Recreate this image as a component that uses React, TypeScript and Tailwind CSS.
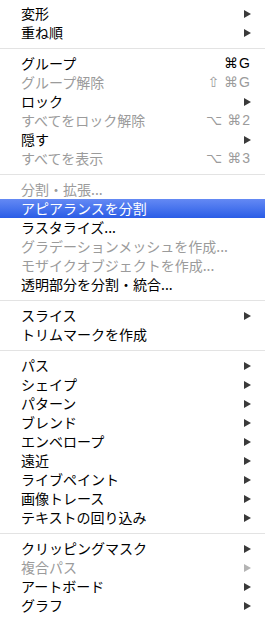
import type { ReactNode } from 'react';

type Item = {
    label: string;
    disabled?: boolean;
    arrow?: boolean;
    shortcut?: string;
    active?: boolean;
};

const groups: Item[][] = [
    [
        { label: '変形', arrow: true },
        { label: '重ね順', arrow: true },
    ],
    [
        { label: 'グループ', shortcut: '⌘G' },
        { label: 'グループ解除', shortcut: '⇧⌘G', disabled: true },
        { label: 'ロック', arrow: true },
        { label: 'すべてをロック解除', shortcut: '⌥⌘2', disabled: true },
        { label: '隠す', arrow: true },
        { label: 'すべてを表示', shortcut: '⌥⌘3', disabled: true },
    ],
    [
        { label: '分割・拡張...', disabled: true },
        { label: 'アピアランスを分割', active: true },
        { label: 'ラスタライズ...' },
        { label: 'グラデーションメッシュを作成...', disabled: true },
        { label: 'モザイクオブジェクトを作成...', disabled: true },
        { label: '透明部分を分割・統合...' },
    ],
    [
        { label: 'スライス', arrow: true },
        { label: 'トリムマークを作成' },
    ],
    [
        { label: 'パス', arrow: true },
        { label: 'シェイプ', arrow: true },
        { label: 'パターン', arrow: true },
        { label: 'ブレンド', arrow: true },
        { label: 'エンベロープ', arrow: true },
        { label: '遠近', arrow: true },
        { label: 'ライブペイント', arrow: true },
        { label: '画像トレース', arrow: true },
        { label: 'テキストの回り込み', arrow: true },
    ],
    [
        { label: 'クリッピングマスク', arrow: true },
        { label: '複合パス', arrow: true, disabled: true },
        { label: 'アートボード', arrow: true },
        { label: 'グラフ', arrow: true },
    ],
];

function Arrow({ color }: { color: string }) {
    return (
        <svg width="7" height="8" viewBox="0 0 7 8" className="block">
            <path d="M0 0L7 4L0 8Z" fill={color} />
        </svg>
    );
}

function Shortcut({ keys }: { keys: string }) {
    const chars = Array.from(keys);
    const extra = chars.length > 2 ? chars.slice(0, chars.length - 2) : [];
    const rest = chars.slice(extra.length).join('');
    return (
        <span className="flex items-center font-['Liberation_Sans','DejaVu_Sans',sans-serif] text-[14px] tracking-[1px]">
            {extra.map((c) => (
                <span key={c} className="mr-[4px]">
                    {c}
                </span>
            ))}
            <span>{rest}</span>
        </span>
    );
}

function Row({ item }: { item: Item }) {
    const textColor = item.active ? 'text-white' : item.disabled ? 'text-[#9b9b9b]' : 'text-black';
    let right: ReactNode = null;
    if (item.arrow) {
        right = <Arrow color={item.active ? '#ffffff' : item.disabled ? '#b4b4b4' : '#3a3a3a'} />;
    } else if (item.shortcut) {
        right = <Shortcut keys={item.shortcut} />;
    }
    return (
        <div
            className={`h-[19px] flex items-center justify-between pl-[21px] pr-[14px] ${textColor} ${
                item.active ? 'bg-gradient-to-b from-[#6489f4] to-[#2a5ce6]' : ''
            }`}
        >
            <span className="text-[14px] leading-[19px] whitespace-nowrap">{item.label}</span>
            {right}
        </div>
    );
}

export default function App() {
    return (
        <div className="w-[265px] h-[619px] bg-white py-[4px] font-['Noto_Sans_CJK_JP','Liberation_Sans',sans-serif] overflow-hidden">
            {groups.map((group, gi) => (
                <div key={gi}>
                    {gi > 0 && (
                        <div className="h-[12px] flex items-center">
                            <div className="h-px w-full bg-[#e3e3e3]" />
                        </div>
                    )}
                    {group.map((item) => (
                        <Row key={item.label} item={item} />
                    ))}
                </div>
            ))}
        </div>
    );
}
